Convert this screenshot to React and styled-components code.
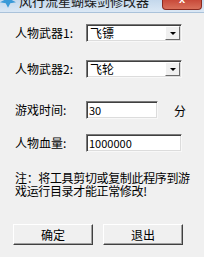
import React, { useState } from "react";
import styled, { createGlobalStyle } from "styled-components";

const Global = createGlobalStyle`
  html, body { margin: 0; padding: 0; background: #f0f0f0; }
  * { box-sizing: border-box; }
`;

const FONT = `"Noto Sans CJK SC", "Liberation Sans", sans-serif`;

const App = () => {
  const [time, setTime] = useState("30");
  const [blood, setBlood] = useState("1000000");

  return (
    <Window>
      <Global />
      <TitleBar>
        <AppIcon viewBox="0 0 14 12">
          <path d="M1 2 L6 4 L9 0 L10 5 L14 7 L9 8 L7 12 L5 8 L0 7 L4 5 Z" fill="#3a9ad8" />
          <path d="M6 4 L9 0 L10 5 Z" fill="#8cc8f0" />
        </AppIcon>
        <TitleText>风行流星蝴蝶剑修改器</TitleText>
        <CloseButton>
          <span>x</span>
        </CloseButton>
      </TitleBar>
      <Body>
        <Row $top={11}>
          <Label>人物武器1:</Label>
          <Select>
            <SelectText>飞镖</SelectText>
            <Arrow />
          </Select>
        </Row>
        <Row $top={18}>
          <Label>人物武器2:</Label>
          <Select>
            <SelectText>飞轮</SelectText>
            <Arrow />
          </Select>
        </Row>
        <Row $top={23}>
          <Label>游戏时间:</Label>
          <Input $width={72} value={time} onChange={(e) => setTime(e.target.value)} />
          <Unit>分</Unit>
        </Row>
        <Row $top={15}>
          <Label>人物血量:</Label>
          <Input $width={96} value={blood} onChange={(e) => setBlood(e.target.value)} />
        </Row>
        <Note>
          <NoteLine>注：将工具剪切或复制此程序到游</NoteLine>
          <NoteLine>戏运行目录才能正常修改!</NoteLine>
        </Note>
        <Buttons>
          <Button>确定</Button>
          <Button>退出</Button>
        </Buttons>
      </Body>
    </Window>
  );
};

const Window = styled.div`
  width: 204px;
  height: 257px;
  overflow: hidden;
  background: #f0f0f0;
  font-family: ${FONT};
  color: #000;
`;

const TitleBar = styled.div`
  height: 13px;
  display: flex;
  align-items: flex-start;
  overflow: hidden;
  background: linear-gradient(#c4d8ec, #dbe8f5);
  border-bottom: 1px solid #aac2da;
`;

const AppIcon = styled.svg`
  width: 16px;
  height: 14px;
  margin: -6px 3px 0 0;
  flex: none;
`;

const TitleText = styled.div`
  font-size: 13px;
  line-height: 13px;
  margin-top: -6px;
  color: #1a1a1a;
  white-space: nowrap;
  flex: 1;
`;

const CloseButton = styled.div`
  width: 40px;
  height: 10px;
  margin-right: 2px;
  flex: none;
  border: 1px solid #8a2a20;
  border-top: none;
  border-radius: 0 0 4px 4px;
  background: linear-gradient(#c84a3a, #d9705a);
  display: flex;
  justify-content: center;
  overflow: hidden;
  span {
    color: #fff;
    font-family: "Liberation Sans", sans-serif;
    font-weight: bold;
    font-size: 11px;
    line-height: 11px;
    margin-top: -6px;
  }
`;

const Body = styled.div`
  padding: 0 0 0 15px;
  display: flex;
  flex-direction: column;
`;

const Row = styled.div`
  display: flex;
  align-items: center;
  height: 18px;
  margin-top: ${(p) => p.$top}px;
`;

const Label = styled.div`
  width: 71px;
  font-size: 12px;
  line-height: 18px;
  white-space: nowrap;
`;

const Select = styled.div`
  width: 96px;
  height: 18px;
  display: flex;
  align-items: center;
  background: #fff;
  border: 1px solid;
  border-color: #7a7a7a #f8f8f8 #f8f8f8 #7a7a7a;
  box-shadow: inset 1px 1px 0 #404040, inset -1px -1px 0 #dcdcdc;
  padding: 0 1px 0 3px;
`;

const SelectText = styled.div`
  flex: 1;
  font-size: 12px;
  line-height: 14px;
`;

const Arrow = styled.div`
  width: 15px;
  height: 14px;
  background: #f0f0f0;
  border: 1px solid;
  border-color: #fff #6a6a6a #6a6a6a #fff;
  display: flex;
  align-items: center;
  justify-content: center;
  &::after {
    content: "";
    border-left: 3px solid transparent;
    border-right: 3px solid transparent;
    border-top: 3px solid #000;
  }
`;

const Input = styled.input`
  width: ${(p) => p.$width}px;
  height: 18px;
  margin: 0;
  padding: 0 2px;
  font-family: ${FONT};
  font-size: 11px;
  background: #fff;
  border: 1px solid;
  border-color: #7a7a7a #f8f8f8 #f8f8f8 #7a7a7a;
  box-shadow: inset 1px 1px 0 #404040, inset -1px -1px 0 #dcdcdc;
  outline: none;
`;

const Unit = styled.div`
  font-size: 12px;
  margin-left: 16px;
`;

const Note = styled.div`
  margin-top: 19px;
  display: flex;
  flex-direction: column;
`;

const NoteLine = styled.div`
  font-size: 12px;
  line-height: 13px;
  height: 13px;
  white-space: nowrap;
  letter-spacing: -0.35px;
`;

const Buttons = styled.div`
  display: flex;
  gap: 10px;
  margin: 27px 0 0 -2px;
`;

const Button = styled.button`
  width: 80px;
  height: 21px;
  padding: 0;
  font-family: ${FONT};
  font-size: 12px;
  color: #000;
  background: #f0f0f0;
  border: 1px solid;
  border-color: #fff #404040 #404040 #fff;
  box-shadow: inset -1px -1px 0 #a0a0a0;
`;

export default App;
